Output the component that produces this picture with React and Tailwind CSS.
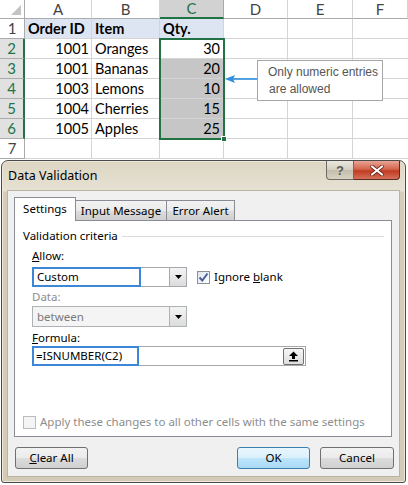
import React from "react";

const sheetFont = { fontFamily: "Lato, 'Liberation Sans', sans-serif" };
const uiFont = { fontFamily: "'Noto Sans', 'Liberation Sans', sans-serif" };

const rows = [
  ["Order ID", "Item", "Qty."],
  ["1001", "Oranges", "30"],
  ["1001", "Bananas", "20"],
  ["1003", "Lemons", "10"],
  ["1004", "Cherries", "15"],
  ["1005", "Apples", "25"],
  ["", "", ""],
];

function Sheet() {
  const cols = ["A", "B", "C", "D", "E", "F"];
  return (
    <div className="relative h-[160px] overflow-hidden bg-white" style={sheetFont}>
      <div className="grid grid-cols-[25px_67px_68px_64px_64px_65px_55px] grid-rows-[19px_20px_20px_20px_20px_20px_20px_20px]">
        {/* header row */}
        <div className="relative border-r border-b border-[#ababab] bg-white">
          <svg className="absolute right-[3px] bottom-[3px]" width="10" height="10" viewBox="0 0 10 10">
            <polygon points="10,0 10,10 0,10" fill="#c4c4c4" />
          </svg>
        </div>
        {cols.map((c) => (
          <div
            key={c}
            className={
              c === "C"
                ? "flex items-center justify-center border-r border-[#ababab] border-b-2 border-b-[#217346] bg-[#d2d2d2] text-[15px] text-[#217346]"
                : "flex items-center justify-center border-r border-b border-[#d4d4d4] border-b-[#ababab] bg-white text-[15px] text-[#444]"
            }
          >
            {c}
          </div>
        ))}
        {rows.map((r, i) => {
          const n = i + 1;
          const sel = n >= 2 && n <= 6;
          return (
            <React.Fragment key={n}>
              <div
                className={
                  sel
                    ? "flex items-center justify-center border-b border-[#ababab] border-r-2 border-r-[#217346] bg-[#e1e1e1] text-[15px] text-[#217346]"
                    : "flex items-center justify-center border-r border-b border-[#ababab] bg-white text-[15px] text-[#444]"
                }
              >
                {n}
              </div>
              <div
                className={
                  (n === 1 ? "bg-[#dde5f3] font-bold justify-start pl-[3px]" : "bg-white justify-end pr-[2px]") +
                  " flex items-center border-r border-b border-[#d4d4d4] text-[14.5px] text-black"
                }
              >
                {r[0]}
              </div>
              <div
                className={
                  (n === 1 ? "bg-[#dde5f3] font-bold" : "bg-white") +
                  " flex items-center pl-[3px] border-r border-b border-[#d4d4d4] text-[14.5px] text-black"
                }
              >
                {r[1]}
              </div>
              <div
                className={
                  (n === 1
                    ? "bg-[#dde5f3] font-bold justify-start pl-[3px]"
                    : n >= 3 && n <= 6
                    ? "bg-[#c6c6c6] justify-end pr-[3px]"
                    : "bg-white justify-end pr-[3px]") +
                  " flex items-center border-r border-b border-[#d4d4d4] text-[14.5px] text-black"
                }
              >
                {r[2]}
              </div>
              <div className="border-r border-b border-[#d4d4d4]" />
              <div className="border-r border-b border-[#d4d4d4]" />
              <div className="border-b border-[#d4d4d4]" />
            </React.Fragment>
          );
        })}
      </div>

      {/* selection border */}
      <div className="pointer-events-none absolute left-[159px] top-[38px] h-[102px] w-[66px] border-2 border-[#217346]" />
      <div className="absolute left-[221px] top-[136px] h-[6px] w-[6px] border border-white bg-[#217346]" />

      {/* callout */}
      <div
        className="absolute left-[257px] top-[60px] h-[41px] w-[126px] whitespace-nowrap border border-[#a6a6a6] bg-white pl-[10px] pt-[3px] text-[12px] leading-[17px] text-[#555]"
        style={{ fontFamily: "'Liberation Sans', Arial, sans-serif" }}
      >
        <div>Only numeric entries</div>
        <div className="pl-[1px]">are allowed</div>
      </div>
      <svg className="absolute left-[224px] top-[74px]" width="34" height="10" viewBox="0 0 34 10">
        <line x1="6" y1="5" x2="33" y2="5" stroke="#2f8fe0" strokeWidth="1.6" />
        <polygon points="1,5 11,1 9,5 11,9" fill="#2f8fe0" />
      </svg>
    </div>
  );
}

function Triangle() {
  return (
    <svg width="7" height="4" viewBox="0 0 7 4">
      <polygon points="0,0 7,0 3.5,4" fill="#000" />
    </svg>
  );
}

function Dialog() {
  return (
    <div
      className="ml-[1px] flex h-[323px] w-[405px] flex-col rounded-t-[7px] rounded-b-[3px] border border-[#4a4a4a] bg-[linear-gradient(180deg,#ddd6c3_0px,#e6e1d3_30px,#d5cdb8_31px,#d3cbb5_100%)] shadow-[inset_0_0_0_1px_#efe9db]"
      style={uiFont}
    >
      {/* title bar */}
      <div className="flex h-[29px] items-start pl-[6px] pr-[5px]">
        <div className="mt-[6px] text-[12.5px] text-black">Data Validation</div>
        <div className="flex-1" />
        <div className="flex">
          <div className="flex h-[19px] w-[28px] items-center justify-center rounded-bl-[4px] border border-t-0 border-[#6d6a63] bg-[linear-gradient(180deg,#ebe7de,#d4cfc2_50%,#c3bdad_51%,#d8d2c4)]">
            <span className="text-[13px] font-bold leading-none text-[#5a5a5a]" style={{ fontFamily: "'Liberation Sans', sans-serif" }}>?</span>
          </div>
          <div className="flex h-[19px] w-[46px] items-center justify-center rounded-br-[4px] border border-l-0 border-t-0 border-[#5b2a22] bg-[linear-gradient(180deg,#e8a493,#d4664f_45%,#c13b22_55%,#d5715a)]">
            <svg width="14" height="11" viewBox="0 0 14 11">
              <path d="M2 1.5 L12 9.5 M12 1.5 L2 9.5" stroke="#6b2016" strokeWidth="3.6" strokeLinecap="round" />
              <path d="M2 1.5 L12 9.5 M12 1.5 L2 9.5" stroke="#fff" strokeWidth="2.2" strokeLinecap="round" />
            </svg>
          </div>
        </div>
      </div>

      {/* client area */}
      <div className="mx-[5px] flex h-[287px] flex-col border border-[#b9b3a3] bg-[#f0f0f0] pl-[6px] pt-[6px] text-[11.5px] text-black">
        {/* tabs */}
        <div className="flex h-[23px] items-end">
          <div className="relative z-10 -mb-px flex h-[24px] w-[62px] items-start justify-center border border-b-0 border-[#898c95] bg-white pt-[2px]">
            Settings
          </div>
          <div className="flex h-[20px] w-[91px] items-center justify-center border border-l-0 border-b-0 border-[#898c95] bg-[linear-gradient(180deg,#f2f2f2,#ebebeb_50%,#dddddd_51%,#cfcfcf)]">
            Input Message
          </div>
          <div className="flex h-[20px] w-[68px] items-center justify-center border border-l-0 border-b-0 border-[#898c95] bg-[linear-gradient(180deg,#f2f2f2,#ebebeb_50%,#dddddd_51%,#cfcfcf)]">
            Error Alert
          </div>
        </div>

        {/* panel */}
        <div className="flex h-[217px] w-[378px] flex-col border border-[#898c95] bg-white">
          <div className="mt-[7px] flex h-[16px] items-center pl-[8px] pr-[7px]">
            <span>Validation criteria</span>
            <div className="ml-[4px] mt-[1px] h-px flex-1 bg-[#dcdcdc]" />
          </div>

          <div className="flex flex-col pl-[17px]">
            <div className="mt-[4px] h-[16px] leading-[16px]">
              <span className="underline">A</span>llow:
            </div>
            <div className="mt-[3px] flex h-[20px] items-center">
              <div className="flex h-[20px] w-[155px] border border-[#a5a9ad] bg-white">
                <div className="-ml-px -mt-px flex h-[20px] w-[109px] items-center border-2 border-[#3c87d8] pl-[3px]">
                  Custom
                </div>
                <div className="flex-1" />
                <div className="flex h-[18px] w-[17px] items-center justify-center border-l border-[#a5a9ad] bg-[linear-gradient(180deg,#f4f4f4,#dcdcdc)]">
                  <Triangle />
                </div>
              </div>
              <div className="ml-[10px] flex h-[13px] w-[13px] items-center justify-center border border-[#8e8f8f] bg-[linear-gradient(135deg,#dfe3ec,#ffffff)]">
                <svg width="11" height="11" viewBox="0 0 11 11">
                  <path d="M1.5 5.5 L4.3 8.5 L9.5 1.5" fill="none" stroke="#4a5f97" strokeWidth="2" />
                </svg>
              </div>
              <span className="ml-[4px]">
                Ignore <span className="underline">b</span>lank
              </span>
            </div>

            <div className="mt-[2px] h-[16px] leading-[16px] text-[#8d8d8d]">Data:</div>
            <div className="mt-[1px] flex h-[21px] w-[155px] items-center border border-[#adb2b5] bg-[#f4f4f4]">
              <div className="flex-1 pl-[4px] text-[#7a7a7a]">between</div>
              <div className="flex h-[19px] w-[17px] items-center justify-center border-l border-[#adb2b5] bg-[linear-gradient(180deg,#f4f4f4,#dcdcdc)]">
                <Triangle />
              </div>
            </div>

            <div className="mt-[3px] h-[16px] leading-[16px]">
              <span className="underline">F</span>ormula:
            </div>
            <div className="flex h-[20px] w-[274px] items-center border border-[#a5a9ad] bg-white">
              <div className="-ml-px -mt-px flex h-[20px] w-[107px] items-center border-2 border-[#3c87d8] pl-[2px]">
                =ISNUMBER(C2)
              </div>
              <div className="flex-1" />
              <div className="mr-px flex h-[17px] w-[21px] items-center justify-center rounded-[2px] border border-[#707070] bg-[linear-gradient(180deg,#f6f6f6,#dedede)]">
                <svg width="11" height="11" viewBox="0 0 11 11">
                  <polygon points="5.5,0.5 10,5 7,5 7,8 4,8 4,5 1,5" fill="#000" />
                  <rect x="1" y="9" width="9" height="1.5" fill="#000" />
                </svg>
              </div>
            </div>
          </div>

          <div className="mt-[48px] flex h-[16px] items-center pl-[8px] text-[#8d8d8d]">
            <div className="h-[13px] w-[13px] border border-[#bcbcbc] bg-[#f4f4f4]" />
            <span className="ml-[4px]">Apply these changes to all other cells with the same settings</span>
          </div>
        </div>

        {/* buttons */}
        <div className="mt-[10px] flex h-[22px] items-center">
          <div className="ml-px flex h-[22px] w-[73px] items-center justify-center rounded-[3px] border border-[#707070] bg-[linear-gradient(180deg,#f2f2f2,#ebebeb_50%,#dddddd_51%,#cfcfcf)]">
            <span>
              <span className="underline">C</span>lear All
            </span>
          </div>
          <div className="flex-1" />
          <div className="flex h-[22px] w-[73px] items-center justify-center rounded-[3px] border border-[#3c7fb1] bg-[linear-gradient(180deg,#eaf6fd,#d9f0fc_50%,#bee6fd_51%,#a7d9f5)]">
            OK
          </div>
          <div className="ml-[10px] mr-[5px] flex h-[22px] w-[74px] items-center justify-center rounded-[3px] border border-[#707070] bg-[linear-gradient(180deg,#f2f2f2,#ebebeb_50%,#dddddd_51%,#cfcfcf)]">
            Cancel
          </div>
        </div>
      </div>
    </div>
  );
}

export default function App() {
  return (
    <div className="h-[485px] w-[408px] overflow-hidden bg-white">
      <Sheet />
      <Dialog />
    </div>
  );
}
